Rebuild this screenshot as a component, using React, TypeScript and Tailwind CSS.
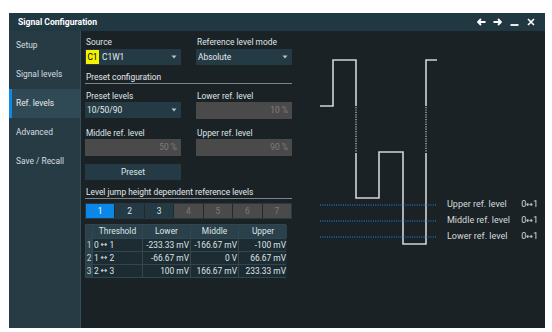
import * as React from "react";

const navItems = ["Setup", "Signal levels", "Ref. levels", "Advanced", "Save / Recall"];

const rows = [
  ["1", "0", "1", "-233.33 mV", "-166.67 mV", "-100 mV"],
  ["2", "1", "2", "-66.67 mV", "0 V", "66.67 mV"],
  ["3", "2", "3", "100 mV", "166.67 mV", "233.33 mV"],
];

function Arrow() {
  return <span className="font-['DejaVu_Sans',sans-serif] text-[8px] leading-none">↔</span>;
}

function Caret() {
  return (
    <svg width="6" height="4" viewBox="0 0 6 4" className="shrink-0">
      <path d="M0.5 0.5 H5.5 L3 3.5 Z" fill="#b9c3c8" />
    </svg>
  );
}

function Label({ children }: { children: React.ReactNode }) {
  return <div className="h-[12px] leading-[12px] text-[#dfe4e6] px-[1px] whitespace-nowrap">{children}</div>;
}

function Select({ children }: { children: React.ReactNode }) {
  return (
    <div className="h-[16px] bg-[#243a44] flex items-center justify-between pl-[1px] pr-[4px] text-[#e6eaec]">
      <div className="flex items-center gap-[3px]">{children}</div>
      <Caret />
    </div>
  );
}

function Disabled({ value }: { value: string }) {
  return (
    <div className="h-[17px] bg-[#4a4a4a] flex items-center justify-end pr-[4px] text-[#7e7e7e]">
      {value}
    </div>
  );
}

function Section({ children }: { children: React.ReactNode }) {
  return (
    <div className="h-[13px] leading-[12px] border-b border-[#7a868c] text-[#e3e7e9] px-[1px] whitespace-nowrap">
      {children}
    </div>
  );
}

function Legend({ top, label }: { top: string; label: string }) {
  return (
    <div className={`absolute left-[147px] ${top} w-[91px] flex justify-between items-center h-[12px] text-[#d6dadc] text-[9px]`}>
      <span>{label}</span>
      <span className="flex items-center">
        0<Arrow />1
      </span>
    </div>
  );
}

export default function App() {
  return (
    <div className="w-[552px] h-[332px] bg-white overflow-hidden font-['Roboto',sans-serif] text-[8.4px]">
      <div className="ml-[9px] mt-[13px] w-[536px] h-[315px] flex flex-col bg-[#1a2226]">
        {/* title bar */}
        <div className="h-[18px] bg-[#213742] flex items-center justify-between pl-[9px] pr-[10px]">
          <span className="font-bold text-[8.6px] text-white">Signal Configuration</span>
          <div className="flex items-center gap-[7px]">
            <svg width="9" height="8" viewBox="0 0 9 8">
              <path d="M8.5 4 H2 M4 1 L1 4 L4 7" stroke="#fff" strokeWidth="1.8" fill="none" />
            </svg>
            <svg width="9" height="8" viewBox="0 0 9 8">
              <path d="M0.5 4 H7 M5 1 L8 4 L5 7" stroke="#fff" strokeWidth="1.8" fill="none" />
            </svg>
            <svg width="9" height="8" viewBox="0 0 9 8" className="ml-[1px]">
              <path d="M0.5 7 H8.5" stroke="#fff" strokeWidth="1.8" />
            </svg>
            <svg width="8" height="8" viewBox="0 0 8 8" className="ml-[1px]">
              <path d="M1 1 L7 7 M7 1 L1 7" stroke="#fff" strokeWidth="1.6" />
            </svg>
          </div>
        </div>

        <div className="flex flex-1">
          {/* sidebar */}
          <div className="w-[72px] bg-[#263b44] border-r border-[#33505c] flex flex-col">
            {navItems.map((item) => {
              const active = item === "Ref. levels";
              return (
                <div
                  key={item}
                  className={
                    active
                      ? "h-[29px] flex items-center pl-[4px] border-l-[3px] border-[#0d8ae8] bg-[#304a55] text-[#e8ecee]"
                      : "h-[29px] flex items-center pl-[7px] text-[#d6dde0]"
                  }
                >
                  {item}
                </div>
              );
            })}
          </div>

          {/* form */}
          <div className="w-[207px] ml-[4px] pt-[5px] flex flex-col">
            <div className="grid grid-cols-[96px_96px] gap-x-[15px]">
              <div>
                <Label>Source</Label>
                <div className="mt-[1px]">
                  <Select>
                    <span className="h-[14px] w-[13px] bg-[#f4f400] text-black flex items-center justify-center">C1</span>
                    <span>C1W1</span>
                  </Select>
                </div>
              </div>
              <div>
                <Label>Reference level mode</Label>
                <div className="mt-[1px]">
                  <Select>
                    <span className="pl-[1px]">Absolute</span>
                  </Select>
                </div>
              </div>
            </div>

            <div className="mt-[6px]">
              <Section>Preset configuration</Section>
            </div>

            <div className="grid grid-cols-[96px_96px] gap-x-[15px] mt-[6px]">
              <div>
                <Label>Preset levels</Label>
                <Select>
                  <span className="pl-[1px]">10/50/90</span>
                </Select>
              </div>
              <div>
                <Label>Lower ref. level</Label>
                <Disabled value="10 %" />
              </div>
              <div className="mt-[8px]">
                <Label>Middle ref. level</Label>
                <Disabled value="50 %" />
              </div>
              <div className="mt-[8px]">
                <Label>Upper ref. level</Label>
                <Disabled value="90 %" />
              </div>
            </div>

            <div className="mt-[8px] w-[96px] h-[16px] bg-[#243a44] flex items-center justify-center text-[#dfe5e8]">
              Preset
            </div>

            <div className="mt-[6px]">
              <Section>Level jump height dependent reference levels</Section>
            </div>

            <div className="mt-[4px] h-[16px] border border-[#2a383f] bg-[#1f2a2f] flex gap-px">
              {[1, 2, 3, 4, 5, 6, 7].map((n) => (
                <div
                  key={n}
                  className={
                    n === 1
                      ? "flex-1 bg-[#0b87e8] text-white flex items-center justify-center"
                      : n <= 3
                      ? "flex-1 bg-[#243a44] text-[#dfe5e8] flex items-center justify-center"
                      : "flex-1 bg-[#4a4a4a] text-[#7a7a7a] flex items-center justify-center"
                  }
                >
                  {n}
                </div>
              ))}
            </div>

            <div className="mt-[5px] w-[201px] grid grid-cols-[6px_49px_47px_47px_48px] gap-px bg-[#304650] border border-[#304650] text-[#dfe4e6] whitespace-nowrap">
              <div className="h-[13px] bg-[#2a404a]" />
              {["Threshold", "Lower", "Middle", "Upper"].map((h) => (
                <div key={h} className="h-[13px] bg-[#2a404a] flex items-center justify-center">
                  {h}
                </div>
              ))}
              {rows.map((r) => (
                <React.Fragment key={r[0]}>
                  <div className="h-[12px] bg-[#2a404a] flex items-center justify-center text-[#c9d0d3]">{r[0]}</div>
                  <div className="h-[12px] bg-[#1d2c33] flex items-center gap-[2px] pl-[1px]">
                    <span>{r[1]}</span>
                    <Arrow />
                    <span>{r[2]}</span>
                  </div>
                  <div className="h-[12px] bg-[#1d2c33] flex items-center justify-end pr-[1px]">{r[3]}</div>
                  <div className="h-[12px] bg-[#1d2c33] flex items-center justify-end pr-[1px]">{r[4]}</div>
                  <div className="h-[12px] bg-[#1d2c33] flex items-center justify-end pr-[1px]">{r[5]}</div>
                </React.Fragment>
              ))}
            </div>
          </div>

          {/* diagram */}
          <div className="relative flex-1 ml-[8px]">
            <svg width="245" height="297" className="absolute left-0 top-0">
              <g stroke="#d2d4d5" strokeWidth="1.6" fill="none">
                <path d="M20 75 H33 V29 H56 V75" />
                <path d="M56 122 V167 H79 V121 H103 V213 H126 V122" />
                <path d="M126 75 V29 H137" />
              </g>
              <g stroke="#9aa0a3" strokeWidth="1.6" strokeDasharray="1.2 1.2" fill="none">
                <path d="M56 76 V121" />
                <path d="M126 76 V121" />
              </g>
              <g stroke="#1d8fe6" strokeWidth="1.2" strokeDasharray="1 1.3" fill="none">
                <path d="M20 174 H137" />
                <path d="M20 190 H137" />
                <path d="M20 206 H137" />
              </g>
            </svg>
            <Legend top="top-[168px]" label="Upper ref. level" />
            <Legend top="top-[184px]" label="Middle ref. level" />
            <Legend top="top-[200px]" label="Lower ref. level" />
          </div>
        </div>
      </div>
    </div>
  );
}
